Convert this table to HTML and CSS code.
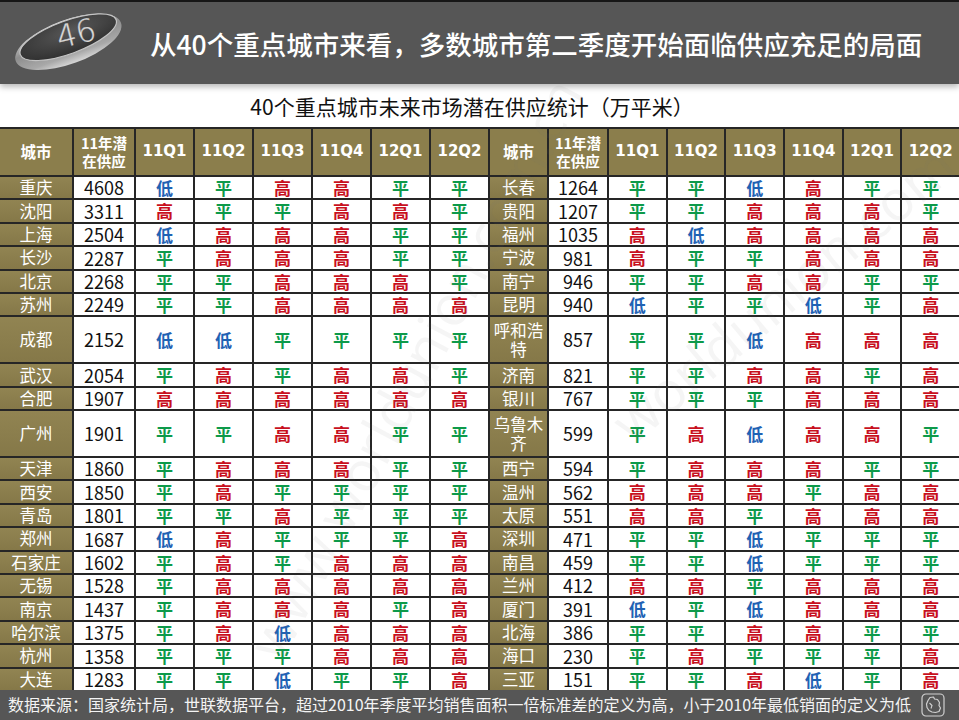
FILE: index.html
```html
<!DOCTYPE html>
<html lang="zh-CN">
<head>
<meta charset="utf-8">
<title>40个重点城市未来市场潜在供应统计</title>
<link rel="stylesheet" href="styles.css">
</head>
<body>
<div class="page">
  <header class="top">
    <svg class="logo" viewBox="0 0 130 82" width="130" height="82" aria-hidden="true">
      <defs>
        <linearGradient id="rim" x1="0" y1="0" x2="0" y2="1">
          <stop offset="0" stop-color="#dcdcdc"/>
          <stop offset="0.45" stop-color="#8e8e8e"/>
          <stop offset="0.8" stop-color="#a8a8a8"/>
          <stop offset="1" stop-color="#d6d6d6"/>
        </linearGradient>
        <radialGradient id="face" cx="0.55" cy="0.35" r="0.7">
          <stop offset="0" stop-color="#585858"/>
          <stop offset="1" stop-color="#2e2e2e"/>
        </radialGradient>
      </defs>
      <g transform="rotate(-20 68 39)">
        <ellipse cx="68" cy="40" rx="56" ry="22" fill="url(#rim)"/>
        <ellipse cx="69.5" cy="35.5" rx="51" ry="16.5" fill="url(#face)"/>
        <ellipse cx="69.5" cy="35.5" rx="51" ry="16.5" fill="none" stroke="#c4c4c4" stroke-width="1.2"/>
      </g>
      <text x="76" y="42" transform="rotate(-14 76 31)" text-anchor="middle" class="logo-num">46</text>
    </svg>
    <h1 class="title">从40个重点城市来看，多数城市第二季度开始面临供应充足的局面</h1>
  </header>

  <div class="subtitle">40个重点城市未来市场潜在供应统计（万平米）</div>

  <div class="grid">
    <div class="th">城市</div><div class="th two">11年潜<br>在供应</div><div class="th q">11Q1</div><div class="th q">11Q2</div><div class="th q">11Q3</div><div class="th q">11Q4</div><div class="th q">12Q1</div><div class="th q">12Q2</div>
    <div class="th">城市</div><div class="th two">11年潜<br>在供应</div><div class="th q">11Q1</div><div class="th q">11Q2</div><div class="th q">11Q3</div><div class="th q">11Q4</div><div class="th q">12Q1</div><div class="th q">12Q2</div>

    <div class="city">重庆</div><div class="num">4608</div><b class="lo">低</b><b class="md">平</b><b class="hi">高</b><b class="hi">高</b><b class="md">平</b><b class="md">平</b>
    <div class="city">长春</div><div class="num">1264</div><b class="md">平</b><b class="md">平</b><b class="lo">低</b><b class="hi">高</b><b class="md">平</b><b class="md">平</b>

    <div class="city">沈阳</div><div class="num">3311</div><b class="hi">高</b><b class="md">平</b><b class="md">平</b><b class="hi">高</b><b class="hi">高</b><b class="md">平</b>
    <div class="city">贵阳</div><div class="num">1207</div><b class="md">平</b><b class="md">平</b><b class="hi">高</b><b class="hi">高</b><b class="hi">高</b><b class="md">平</b>

    <div class="city">上海</div><div class="num">2504</div><b class="lo">低</b><b class="hi">高</b><b class="hi">高</b><b class="hi">高</b><b class="md">平</b><b class="md">平</b>
    <div class="city">福州</div><div class="num">1035</div><b class="hi">高</b><b class="lo">低</b><b class="hi">高</b><b class="hi">高</b><b class="hi">高</b><b class="hi">高</b>

    <div class="city">长沙</div><div class="num">2287</div><b class="md">平</b><b class="hi">高</b><b class="hi">高</b><b class="hi">高</b><b class="md">平</b><b class="md">平</b>
    <div class="city">宁波</div><div class="num">981</div><b class="hi">高</b><b class="md">平</b><b class="md">平</b><b class="hi">高</b><b class="hi">高</b><b class="hi">高</b>

    <div class="city">北京</div><div class="num">2268</div><b class="md">平</b><b class="md">平</b><b class="hi">高</b><b class="hi">高</b><b class="hi">高</b><b class="md">平</b>
    <div class="city">南宁</div><div class="num">946</div><b class="md">平</b><b class="md">平</b><b class="hi">高</b><b class="hi">高</b><b class="md">平</b><b class="md">平</b>

    <div class="city">苏州</div><div class="num">2249</div><b class="md">平</b><b class="md">平</b><b class="hi">高</b><b class="hi">高</b><b class="hi">高</b><b class="hi">高</b>
    <div class="city">昆明</div><div class="num">940</div><b class="lo">低</b><b class="md">平</b><b class="md">平</b><b class="lo">低</b><b class="md">平</b><b class="hi">高</b>

    <div class="city">成都</div><div class="num">2152</div><b class="lo">低</b><b class="lo">低</b><b class="md">平</b><b class="md">平</b><b class="md">平</b><b class="md">平</b>
    <div class="city">呼和浩特</div><div class="num">857</div><b class="md">平</b><b class="md">平</b><b class="lo">低</b><b class="hi">高</b><b class="hi">高</b><b class="hi">高</b>

    <div class="city">武汉</div><div class="num">2054</div><b class="md">平</b><b class="hi">高</b><b class="md">平</b><b class="hi">高</b><b class="hi">高</b><b class="md">平</b>
    <div class="city">济南</div><div class="num">821</div><b class="md">平</b><b class="md">平</b><b class="hi">高</b><b class="hi">高</b><b class="md">平</b><b class="hi">高</b>

    <div class="city">合肥</div><div class="num">1907</div><b class="hi">高</b><b class="hi">高</b><b class="hi">高</b><b class="hi">高</b><b class="hi">高</b><b class="hi">高</b>
    <div class="city">银川</div><div class="num">767</div><b class="md">平</b><b class="md">平</b><b class="md">平</b><b class="hi">高</b><b class="hi">高</b><b class="hi">高</b>

    <div class="city">广州</div><div class="num">1901</div><b class="md">平</b><b class="md">平</b><b class="hi">高</b><b class="hi">高</b><b class="md">平</b><b class="md">平</b>
    <div class="city">乌鲁木齐</div><div class="num">599</div><b class="md">平</b><b class="hi">高</b><b class="lo">低</b><b class="hi">高</b><b class="hi">高</b><b class="md">平</b>

    <div class="city">天津</div><div class="num">1860</div><b class="md">平</b><b class="hi">高</b><b class="hi">高</b><b class="hi">高</b><b class="md">平</b><b class="md">平</b>
    <div class="city">西宁</div><div class="num">594</div><b class="md">平</b><b class="hi">高</b><b class="hi">高</b><b class="hi">高</b><b class="md">平</b><b class="md">平</b>

    <div class="city">西安</div><div class="num">1850</div><b class="md">平</b><b class="hi">高</b><b class="md">平</b><b class="md">平</b><b class="md">平</b><b class="md">平</b>
    <div class="city">温州</div><div class="num">562</div><b class="hi">高</b><b class="hi">高</b><b class="hi">高</b><b class="md">平</b><b class="hi">高</b><b class="hi">高</b>

    <div class="city">青岛</div><div class="num">1801</div><b class="md">平</b><b class="md">平</b><b class="hi">高</b><b class="md">平</b><b class="md">平</b><b class="md">平</b>
    <div class="city">太原</div><div class="num">551</div><b class="hi">高</b><b class="hi">高</b><b class="md">平</b><b class="hi">高</b><b class="hi">高</b><b class="hi">高</b>

    <div class="city">郑州</div><div class="num">1687</div><b class="lo">低</b><b class="hi">高</b><b class="md">平</b><b class="md">平</b><b class="md">平</b><b class="hi">高</b>
    <div class="city">深圳</div><div class="num">471</div><b class="md">平</b><b class="md">平</b><b class="lo">低</b><b class="md">平</b><b class="md">平</b><b class="md">平</b>

    <div class="city">石家庄</div><div class="num">1602</div><b class="md">平</b><b class="hi">高</b><b class="md">平</b><b class="hi">高</b><b class="hi">高</b><b class="hi">高</b>
    <div class="city">南昌</div><div class="num">459</div><b class="md">平</b><b class="md">平</b><b class="lo">低</b><b class="md">平</b><b class="md">平</b><b class="md">平</b>

    <div class="city">无锡</div><div class="num">1528</div><b class="md">平</b><b class="hi">高</b><b class="hi">高</b><b class="hi">高</b><b class="hi">高</b><b class="hi">高</b>
    <div class="city">兰州</div><div class="num">412</div><b class="hi">高</b><b class="hi">高</b><b class="md">平</b><b class="hi">高</b><b class="hi">高</b><b class="hi">高</b>

    <div class="city">南京</div><div class="num">1437</div><b class="md">平</b><b class="hi">高</b><b class="hi">高</b><b class="hi">高</b><b class="md">平</b><b class="hi">高</b>
    <div class="city">厦门</div><div class="num">391</div><b class="lo">低</b><b class="md">平</b><b class="lo">低</b><b class="hi">高</b><b class="hi">高</b><b class="hi">高</b>

    <div class="city">哈尔滨</div><div class="num">1375</div><b class="md">平</b><b class="hi">高</b><b class="lo">低</b><b class="hi">高</b><b class="hi">高</b><b class="hi">高</b>
    <div class="city">北海</div><div class="num">386</div><b class="md">平</b><b class="md">平</b><b class="hi">高</b><b class="hi">高</b><b class="md">平</b><b class="md">平</b>

    <div class="city">杭州</div><div class="num">1358</div><b class="md">平</b><b class="md">平</b><b class="md">平</b><b class="hi">高</b><b class="hi">高</b><b class="hi">高</b>
    <div class="city">海口</div><div class="num">230</div><b class="md">平</b><b class="hi">高</b><b class="md">平</b><b class="md">平</b><b class="md">平</b><b class="hi">高</b>

    <div class="city">大连</div><div class="num">1283</div><b class="md">平</b><b class="md">平</b><b class="lo">低</b><b class="md">平</b><b class="md">平</b><b class="hi">高</b>
    <div class="city">三亚</div><div class="num">151</div><b class="md">平</b><b class="md">平</b><b class="hi">高</b><b class="lo">低</b><b class="md">平</b><b class="hi">高</b>
  </div>

  <footer class="foot">
    <span class="note">数据来源：国家统计局，世联数据平台，超过2010年季度平均销售面积一倍标准差的定义为高，小于2010年最低销面的定义为低</span>
    <svg class="foot-icon" viewBox="0 0 24 24" width="24" height="24" aria-hidden="true">
      <rect x="1" y="1" width="22" height="22" rx="4" fill="none" stroke="#d0d0d0" stroke-width="1.2"/>
      <path d="M9 4.5 L12.5 4 L13.5 6 L16.5 6.5 L18.5 9.5 L18 12.5 L19.5 15 L18 18.5 L14.5 19.5 L11 19 L8 17.5 L6 14.5 L5.5 11 L7 7.5 Z" fill="none" stroke="#d0d0d0" stroke-width="1.2" stroke-linejoin="round"/>
      <path d="M8.5 10 L11 12.5 L10 15.5" fill="none" stroke="#d0d0d0" stroke-width="1.1"/>
    </svg>
  </footer>

  <div class="wm wm1">www.worldunion.com.cn</div>
  <div class="wm wm3">worldunion.com.cn</div>
</div>
</body>
</html>
```

FILE: styles.css
```css
html, body {
  margin: 0;
  padding: 0;
  background: #ffffff;
}

body {
  font-family: "Noto Sans CJK SC", "Noto Sans", sans-serif;
  color: #111;
}

.page {
  position: relative;
  width: 959px;
  height: 720px;
  overflow: hidden;
}

.top {
  height: 82px;
  border-top: 2px solid #161616;
  background: #565656;
  display: flex;
  align-items: center;
  box-shadow: 0 3px 6px rgba(0, 0, 0, 0.28);
  position: relative;
  z-index: 1;
}

.logo {
  flex: none;
  display: block;
}

.logo-num {
  font-family: "DejaVu Sans", sans-serif;
  font-weight: 200;
  font-size: 31px;
  fill: #e6e6e6;
  stroke: #b0b0b0;
  stroke-width: 0.4;
}

.title {
  margin: 0 0 0 20px;
  padding-top: 2px;
  font-size: 26.5px;
  font-weight: 500;
  line-height: 1.2;
  color: #ffffff;
  white-space: nowrap;
}

.subtitle {
  height: 43px;
  display: flex;
  align-items: center;
  justify-content: center;
  padding: 3px 15px 0 0;
  box-sizing: border-box;
  font-size: 21px;
  line-height: 1.2;
  color: #111;
}

.grid {
  display: grid;
  grid-template-columns: 72px 60px repeat(6, 57px) 57px 58px repeat(6, minmax(0, 1fr));
  grid-template-rows: 46px repeat(6, minmax(0, 1fr)) minmax(0, 2.1fr) repeat(2, minmax(0, 1fr)) minmax(0, 2.1fr) repeat(10, minmax(0, 1fr));
  gap: 2px;
  height: 561px;
  border-top: 2px solid #262626;
  background: #262626;
}

.grid > * {
  display: flex;
  align-items: center;
  justify-content: center;
  text-align: center;
  background: #ffffff;
  min-width: 0;
  min-height: 0;
  line-height: 1.15;
}

.th {
  background: #8b7e4c;
  color: #ffffff;
  font-weight: 700;
  font-size: 15.5px;
}

.grid > .th.two {
  font-size: 14.5px;
  line-height: 18px;
}

.th.q {
  font-family: "DejaVu Sans", sans-serif;
  font-size: 15px;
}

.grid > .city {
  background: linear-gradient(#918452, #857848);
  color: #ffffff;
  font-size: 16.5px;
  line-height: 19px;
  padding: 0 2px;
}

.num {
  font-size: 18px;
  color: #111;
}

.hi, .md, .lo {
  font-size: 17px;
  font-weight: 700;
}

.hi { color: #c8101e; }
.md { color: #0d9a4a; }
.lo { color: #1f62b4; }

.foot {
  height: 30px;
  background: #565656;
  display: flex;
  align-items: center;
  justify-content: space-between;
  padding: 0 14px 0 8px;
}

.note {
  color: #f4f4f4;
  font-size: 16px;
  line-height: 1.2;
  white-space: nowrap;
}

.foot-icon {
  flex: none;
  display: block;
}

.wm {
  position: absolute;
  font-family: "Open Sans", sans-serif;
  font-size: 56px;
  color: rgba(110, 110, 110, 0.07);
  white-space: nowrap;
  pointer-events: none;
  z-index: 2;
}

.wm1 {
  left: 90px;
  top: 330px;
  transform: rotate(-62deg);
}

.wm3 {
  left: 560px;
  top: 230px;
  transform: rotate(-40deg);
}
```
